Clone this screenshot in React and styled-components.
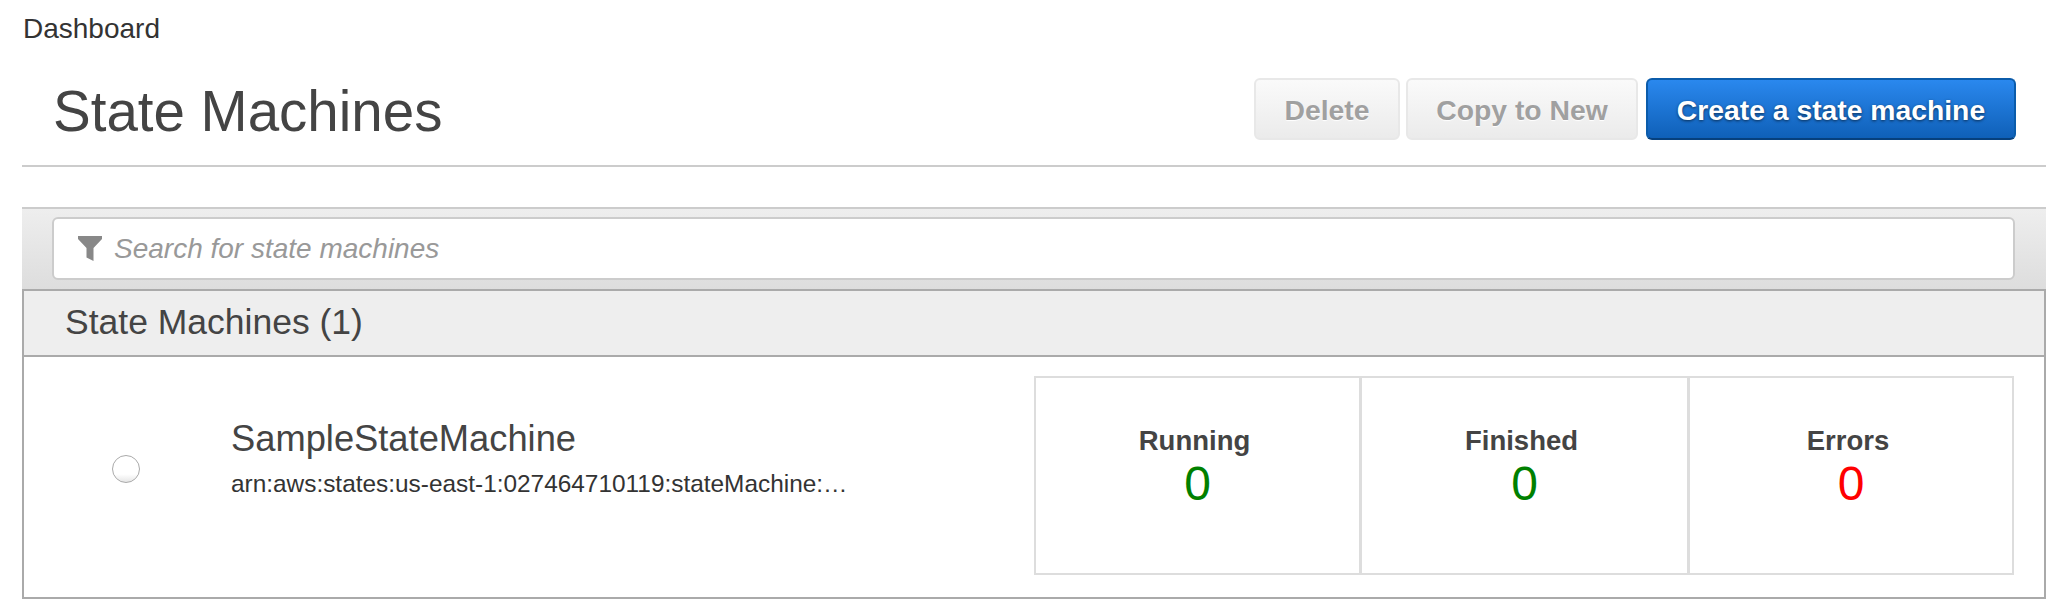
import React from 'react';
import styled, { createGlobalStyle } from 'styled-components';

const GlobalStyle = createGlobalStyle`
  html, body {
    margin: 0;
    padding: 0;
    background: #ffffff;
  }

  * {
    box-sizing: border-box;
  }
`;

const Page = styled.div`
  width: 2062px;
  height: 614px;
  padding: 12px 16px 0 22px;
  overflow: hidden;
  font-family: "Liberation Sans", Arial, sans-serif;
  color: #444444;
`;

const Breadcrumb = styled.div`
  height: 34px;
  line-height: 34px;
  font-size: 28px;
  margin-left: 1px;
  color: #333333;
`;

const TitleBar = styled.div`
  display: flex;
  align-items: center;
  justify-content: space-between;
  height: 121px;
  padding: 15px 30px 2px 31px;
  border-bottom: 2px solid #cccccc;
`;

const Title = styled.h1`
  margin: 0;
  font-size: 56.5px;
  font-weight: 400;
  line-height: 64px;
`;

const Actions = styled.div`
  display: flex;
  gap: 6px;
  margin-top: -7px;
`;

const Button = styled.button`
  height: 62px;
  width: ${(p) => p.$width}px;
  margin-left: ${(p) => (p.$primary ? 2 : 0)}px;
  padding: 3px 0 0;
  border-radius: 6px;
  border: 2px solid ${(p) => (p.$primary ? '#0b5cab' : '#e8e8e8')};
  border-bottom-color: ${(p) => (p.$primary ? '#06407d' : '#e8e8e8')};
  background: ${(p) =>
    p.$primary
      ? 'linear-gradient(#2a88ee, #0f60b8)'
      : 'linear-gradient(#fafafa, #ebebeb)'};
  color: ${(p) => (p.$primary ? '#ffffff' : '#a0a0a0')};
  font-family: inherit;
  font-size: 28.3px;
  font-weight: 700;
  text-shadow: ${(p) =>
    p.$primary ? '0 1px 3px rgba(0, 0, 0, 0.6)' : '0 1px 1px #ffffff'};
`;

const SearchStrip = styled.div`
  margin-top: 40px;
  height: 82px;
  padding: 8px 31px 0 30px;
  border-top: 2px solid #cccccc;
  background: linear-gradient(#eeeeee, #dddddd);
`;

const SearchBox = styled.div`
  display: flex;
  align-items: center;
  gap: 12px;
  height: 63px;
  padding-left: 24px;
  border: 2px solid #cccccc;
  border-radius: 6px;
  background: #ffffff;
`;

const SearchText = styled.span`
  font-size: 28px;
  font-style: italic;
  color: #999999;
`;

const Panel = styled.section`
  border: 2px solid #aaaaaa;
  height: 310px;
`;

const PanelHeader = styled.div`
  height: 66px;
  line-height: 62px;
  padding-left: 41px;
  font-size: 35.5px;
  background: #eeeeee;
  border-bottom: 2px solid #aaaaaa;
`;

const Row = styled.div`
  display: flex;
  align-items: center;
  height: 240px;
  padding: 0 30px 4px 0;
`;

const RadioCell = styled.div`
  display: flex;
  justify-content: center;
  width: 207px;
  padding: 0 4px 12px 0;
`;

const Radio = styled.span`
  display: block;
  width: 28px;
  height: 28px;
  border-radius: 50%;
  border: 1px solid #aaaaaa;
  background: linear-gradient(#ffffff 70%, #e6e6e6);
`;

const Info = styled.div`
  flex: 1;
  min-width: 0;
  margin-bottom: 34px;
`;

const Name = styled.div`
  font-size: 36.3px;
  line-height: 44px;
`;

const Arn = styled.div`
  margin-top: 8px;
  font-size: 24.4px;
  line-height: 30px;
  color: #333333;
`;

const Stats = styled.div`
  display: grid;
  grid-template-columns: 323px 328px 325px;
  width: 980px;
  height: 199px;
  border: 2px solid #dddddd;
`;

const Stat = styled.div`
  padding-top: 47px;
  text-align: center;
  border-left: ${(p) => (p.$first ? 0 : '3px solid #dddddd')};
`;

const StatLabel = styled.div`
  padding-right: 6px;
  font-size: 27.5px;
  font-weight: 700;
  line-height: 32px;
`;

const StatValue = styled.div`
  margin-top: -1px;
  font-size: 48px;
  line-height: 56px;
  color: ${(p) => p.$color};
`;

const FilterIcon = () => (
  <svg width="24" height="25" viewBox="0 0 24 25" aria-hidden="true">
    <path d="M0 0h24v3l-8.500 9v13l-7-3.500V12L0 3z" fill="#888888" />
  </svg>
);

const stats = [
  { label: 'Running', value: 0, color: '#008000' },
  { label: 'Finished', value: 0, color: '#008000' },
  { label: 'Errors', value: 0, color: '#ff0000' },
];

export default function App() {
  return (
    <Page>
      <GlobalStyle />
      <Breadcrumb>Dashboard</Breadcrumb>
      <TitleBar>
        <Title>State Machines</Title>
        <Actions>
          <Button $width={146}>Delete</Button>
          <Button $width={232}>Copy to New</Button>
          <Button $primary $width={370}>Create a state machine</Button>
        </Actions>
      </TitleBar>
      <SearchStrip>
        <SearchBox>
          <FilterIcon />
          <SearchText>Search for state machines</SearchText>
        </SearchBox>
      </SearchStrip>
      <Panel>
        <PanelHeader>State Machines (1)</PanelHeader>
        <Row>
          <RadioCell>
            <Radio />
          </RadioCell>
          <Info>
            <Name>SampleStateMachine</Name>
            <Arn>arn:aws:states:us-east-1:027464710119:stateMachine:…</Arn>
          </Info>
          <Stats>
            {stats.map((s, i) => (
              <Stat key={s.label} $first={i === 0}>
                <StatLabel>{s.label}</StatLabel>
                <StatValue $color={s.color}>{s.value}</StatValue>
              </Stat>
            ))}
          </Stats>
        </Row>
      </Panel>
    </Page>
  );
}
